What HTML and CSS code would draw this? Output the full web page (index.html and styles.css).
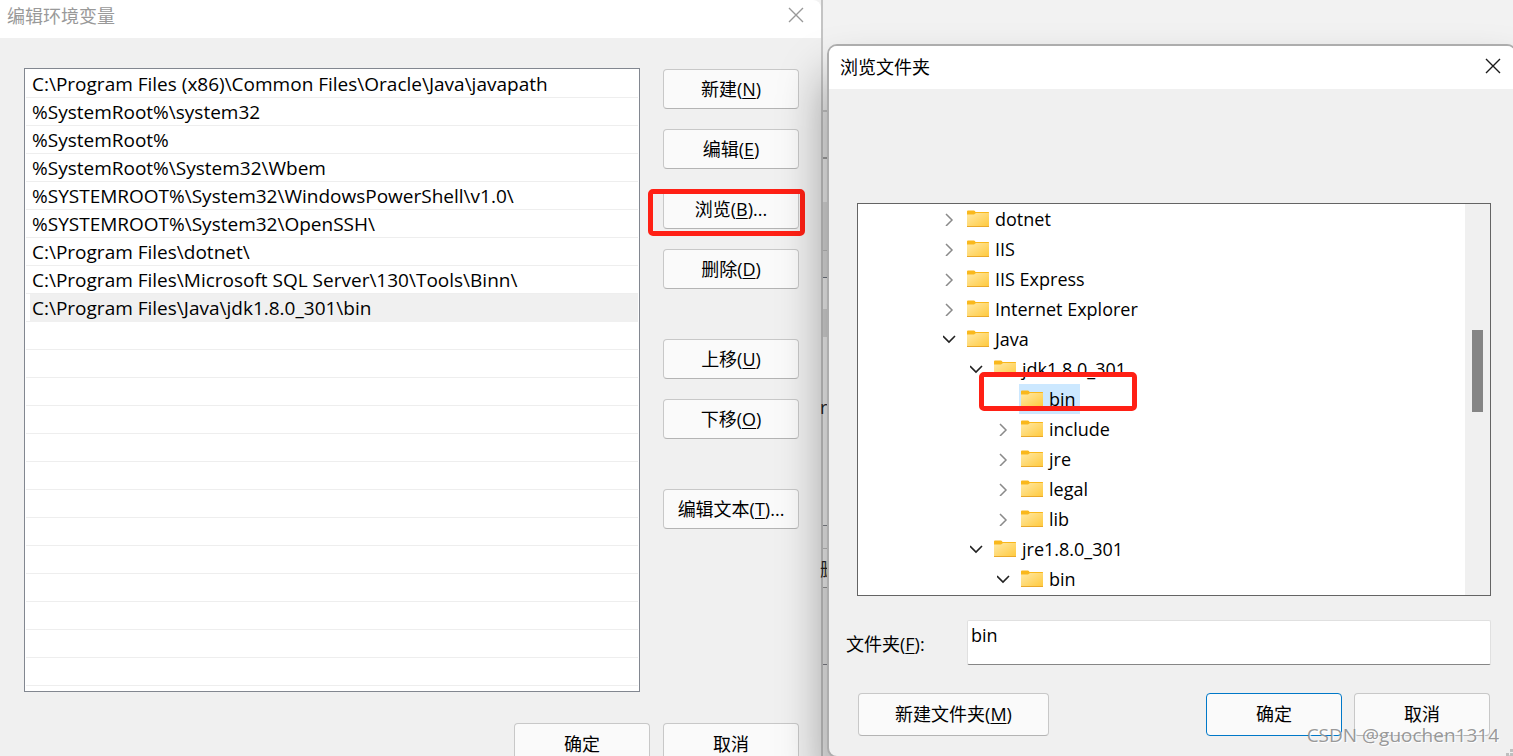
FILE: index.html
```html
<!DOCTYPE html>
<html lang="zh-CN">
<head>
<meta charset="utf-8">
<title>编辑环境变量</title>
<link rel="stylesheet" href="styles.css">
</head>
<body>
<svg class="defs" width="0" height="0" aria-hidden="true">
  <defs>
    <linearGradient id="folder-face" x1="0" y1="0" x2="1" y2="1">
      <stop offset="0" stop-color="#ffe9a6"/>
      <stop offset="1" stop-color="#ffc93c"/>
    </linearGradient>
    <symbol id="folder" viewBox="0 0 22 18">
      <path d="M0 1.500Q0 .5 1 .5H7Q8 .5 8.500 2H21.500Q22 2 22 2.500V8H0Z" fill="#f9b81c"/>
      <path d="M0 4.500H7L9 3H22V17H0Z" fill="url(#folder-face)"/>
      <path d="M0 16.500H22" stroke="#eaa92c"/>
    </symbol>
    <symbol id="closed" viewBox="0 0 14 14">
      <path d="M3 2L9 8L3 14" fill="none" stroke="#8a8a8a" stroke-width="1.500"/>
    </symbol>
    <symbol id="open" viewBox="0 0 14 14">
      <path d="M0 4L6 10L12 4" fill="none" stroke="#222" stroke-width="1.600"/>
    </symbol>
    <symbol id="close" viewBox="0 0 16 16">
      <path d="M1 1L15 15M15 1L1 15" fill="none" stroke="currentColor" stroke-width="1.400"/>
    </symbol>
  </defs>
</svg>
<main class="desktop">
  <section class="window env">
    <header class="titlebar">
      <h1>编辑环境变量</h1>
      <button class="close" type="button" aria-label="关闭"><svg><use href="#close"/></svg></button>
    </header>
    <div class="env-body">
      <ul class="paths">
        <li>C:\Program Files (x86)\Common Files\Oracle\Java\javapath</li>
        <li>%SystemRoot%\system32</li>
        <li>%SystemRoot%</li>
        <li>%SystemRoot%\System32\Wbem</li>
        <li>%SYSTEMROOT%\System32\WindowsPowerShell\v1.0\</li>
        <li>%SYSTEMROOT%\System32\OpenSSH\</li>
        <li>C:\Program Files\dotnet\</li>
        <li>C:\Program Files\Microsoft SQL Server\130\Tools\Binn\</li>
        <li class="selected">C:\Program Files\Java\jdk1.8.0_301\bin</li>
      </ul>
      <div class="actions">
        <div class="group">
          <button class="btn" type="button">新建(<u>N</u>)</button>
          <button class="btn" type="button">编辑(<u>E</u>)</button>
          <div class="marked"><button class="btn" type="button">浏览(<u>B</u>)...</button></div>
          <button class="btn" type="button">删除(<u>D</u>)</button>
        </div>
        <div class="group">
          <button class="btn" type="button">上移(<u>U</u>)</button>
          <button class="btn" type="button">下移(<u>O</u>)</button>
        </div>
        <div class="group">
          <button class="btn" type="button">编辑文本(<u>T</u>)...</button>
        </div>
      </div>
    </div>
    <footer class="env-footer">
      <button class="btn tall" type="button">确定</button>
      <button class="btn tall" type="button">取消</button>
    </footer>
  </section>

  <div class="behind" aria-hidden="true"><span class="peek variable">ri</span><span class="peek remove">删</span></div>

  <section class="window browse">
    <header class="titlebar">
      <h2>浏览文件夹</h2>
      <button class="close" type="button" aria-label="关闭"><svg><use href="#close"/></svg></button>
    </header>
    <div class="browse-body">
      <div class="tree-box">
        <ul class="tree">
          <li><svg class="arrow"><use href="#closed"/></svg><svg class="folder"><use href="#folder"/></svg><span>dotnet</span></li>
          <li><svg class="arrow"><use href="#closed"/></svg><svg class="folder"><use href="#folder"/></svg><span>IIS</span></li>
          <li><svg class="arrow"><use href="#closed"/></svg><svg class="folder"><use href="#folder"/></svg><span>IIS Express</span></li>
          <li><svg class="arrow"><use href="#closed"/></svg><svg class="folder"><use href="#folder"/></svg><span>Internet Explorer</span></li>
          <li><svg class="arrow"><use href="#open"/></svg><svg class="folder"><use href="#folder"/></svg><span>Java</span></li>
          <li class="level-2"><svg class="arrow"><use href="#open"/></svg><svg class="folder"><use href="#folder"/></svg><span>jdk1.8.0_301</span></li>
          <li class="level-3 current"><svg class="arrow"></svg><svg class="folder"><use href="#folder"/></svg><span>bin</span></li>
          <li class="level-3"><svg class="arrow"><use href="#closed"/></svg><svg class="folder"><use href="#folder"/></svg><span>include</span></li>
          <li class="level-3"><svg class="arrow"><use href="#closed"/></svg><svg class="folder"><use href="#folder"/></svg><span>jre</span></li>
          <li class="level-3"><svg class="arrow"><use href="#closed"/></svg><svg class="folder"><use href="#folder"/></svg><span>legal</span></li>
          <li class="level-3"><svg class="arrow"><use href="#closed"/></svg><svg class="folder"><use href="#folder"/></svg><span>lib</span></li>
          <li class="level-2"><svg class="arrow"><use href="#open"/></svg><svg class="folder"><use href="#folder"/></svg><span>jre1.8.0_301</span></li>
          <li class="level-3"><svg class="arrow"><use href="#open"/></svg><svg class="folder"><use href="#folder"/></svg><span>bin</span></li>
        </ul>
        <div class="track"><div class="thumb"></div></div>
      </div>
      <div class="field">
        <label for="folder-name">文件夹(<u>F</u>):</label>
        <input id="folder-name" type="text" value="bin">
      </div>
      <footer class="browse-footer">
        <button class="btn tall wide" type="button">新建文件夹(<u>M</u>)</button>
        <button class="btn tall primary" type="button">确定</button>
        <button class="btn tall" type="button">取消</button>
      </footer>
    </div>
    <svg class="grip" viewBox="0 0 8 8" aria-hidden="true"><path d="M0 5h3v3h-3zM4 5h3v3h-3zM4 1h3v3h-3z" fill="#bfbfbf"/></svg>
  </section>
  <p class="watermark">CSDN @guochen1314</p>
</main>
</body>
</html>
```
FILE: styles.css
```css
*,
*::after {
  box-sizing: border-box;
}

body {
  margin: 0;
  font-family: "Open Sans", "Noto Sans CJK SC", sans-serif;
  font-size: 18px;
  color: #000;
}

ul, h1, h2, p {
  margin: 0;
  padding: 0;
  list-style: none;
  font-size: 18px;
  font-weight: 400;
}

u {
  text-underline-offset: 2px;
  text-decoration-thickness: 1px;
}

.defs {
  position: absolute;
}

.desktop {
  position: relative;
  display: grid;
  grid-template-columns: minmax(0, 821fr) 6px minmax(0, 686fr);
  align-items: start;
  height: 100vh;
  overflow: hidden;
  background: #f2f2f2;
}

.window {
  background: #f0f0f0;
}

.titlebar {
  display: flex;
  align-items: center;
  justify-content: space-between;
  background: #fff;
}

.close {
  display: flex;
  padding: 0;
  border: 0;
  background: none;
  color: #1a1a1a;
}

.close svg {
  width: 16px;
  height: 16px;
}

.btn {
  width: 136px;
  height: 40px;
  padding: 0 0 2px;
  border: 1px solid #c8c8c8;
  border-bottom-color: #b4b4b4;
  border-radius: 4px;
  background: #fafafa;
  color: #000;
  font: inherit;
  white-space: nowrap;
}

.tall {
  height: 43px;
  padding-bottom: 3px;
}

.wide {
  width: 191px;
  margin-right: auto;
}

.primary {
  border-color: #0078c8;
}

/* Environment variable editor */

.env {
  border-radius: 0 8px 0 0;
  overflow: hidden;
}

.env .titlebar {
  height: 38px;
  padding: 0 17px 8px 7px;
  color: #999;
}

.env .close {
  color: #999;
}

.env-body {
  display: flex;
  gap: 23px;
  padding: 30px 22px 31px 24px;
}

.paths {
  flex: 1;
  min-width: 0;
  min-height: 624px;
  padding: 1px 1px 5px;
  border: 1px solid #828790;
  background: repeating-linear-gradient(transparent 0 27px, #eee 27px 28px) content-box, #fff;
  font-size: 19px;
}

.paths li {
  height: 28px;
  margin-left: 4px;
  padding-left: 2px;
  line-height: 28px;
  white-space: nowrap;
}

.paths .selected {
  background: #f0f0f0;
}

.actions {
  display: flex;
  flex-direction: column;
  gap: 50px;
  padding-top: 1px;
}

.group {
  display: flex;
  flex-direction: column;
  gap: 20px;
}

.marked {
  position: relative;
  display: flex;
}

.marked::after,
.current::after {
  content: "";
  position: absolute;
  border: 5px solid #ff2015;
  border-radius: 5px;
}

.marked::after {
  inset: 0 -6px -7px -15px;
}

.env-footer {
  display: flex;
  justify-content: flex-end;
  gap: 13px;
  padding: 0 22px 24px;
}

/* Edge of the window underneath, seen between the two dialogs */

.behind {
  position: relative;
  align-self: stretch;
  border-left: 2px solid #c4c4c4;
  background: linear-gradient(
    #f2f2f2 0 110px, #c8c8c8 110px 112px,
    #ececec 112px 157px, #a0a0a0 157px 159px,
    #f2f2f2 159px 202px, #dcdcdc 202px 250px,
    #c0c0c0 250px 251px, #e0e0e0 251px 277px,
    #707680 277px 278px, #f4f4f4 278px 309px,
    #d8d8d8 309px 337px, #f6f6f6 337px 525px,
    #82858c 525px 526px, #f0f0f0 526px 548px,
    #c0c0c0 548px 549px, #f4f4f4 549px 587px,
    #999 587px 588px, #ececec 588px 664px,
    #808088 664px 665px, #f0f0f0 665px);
}

.peek {
  position: absolute;
  left: -3px;
  line-height: 28px;
  color: #222;
}

.variable {
  top: 393px;
}

.remove {
  top: 555px;
}

/* Folder browser */

.browse {
  position: relative;
  margin: 44px -4px 0 0;
  border: 2px solid #adadad;
  border-radius: 10px;
  box-shadow: 0 32px 48px rgba(0, 0, 0, 0.4);
}

.browse .titlebar {
  height: 43px;
  padding: 0 14px 4px 11px;
  border-radius: 8px 8px 0 0;
}

.browse-body {
  padding: 114px 24px 20px 28px;
}

.tree-box {
  display: flex;
  border: 1px solid #646464;
  background: #fff;
}

.tree {
  flex: 1;
  padding-bottom: 1px;
}

.tree li {
  position: relative;
  display: flex;
  align-items: center;
  height: 30px;
  padding-left: 85px;
}

.tree .level-2 {
  padding-left: 112px;
}

.tree .level-3 {
  padding-left: 139px;
}

.arrow {
  width: 14px;
  height: 14px;
  margin-right: 8px;
}

.folder {
  width: 26px;
  height: 18px;
  padding: 0 2px;
}

.tree span {
  padding: 0 4px;
  line-height: 30px;
}

.current .folder,
.current span {
  height: 30px;
  background: #cce8ff;
}

.current::after {
  top: -12px;
  left: 121px;
  width: 158px;
  height: 39px;
}

.track {
  width: 25px;
  padding: 126px 7px 0;
  background: #f0f0f0;
}

.thumb {
  height: 82px;
  background: #858585;
}

.field {
  display: flex;
  align-items: center;
  margin: 24px 0 28px -11px;
}

.field label {
  width: 121px;
}

.field input {
  flex: 1;
  min-width: 0;
  height: 45px;
  padding: 0 3px 16px;
  border: 1px solid #e0e0e0;
  border-bottom-color: #868686;
  border-radius: 2px;
  background: #fff;
  color: #000;
  font: inherit;
}

.browse-footer {
  display: flex;
  gap: 12px;
  padding: 0 1px;
}

.grip {
  position: absolute;
  right: 1px;
  bottom: 0;
  width: 8px;
  height: 8px;
}

.watermark {
  position: absolute;
  right: 14px;
  bottom: 7px;
  color: rgba(140, 140, 140, 0.9);
  font-size: 19px;
  line-height: 28px;
  text-shadow: 1px 1px 1px #fff;
}
```
